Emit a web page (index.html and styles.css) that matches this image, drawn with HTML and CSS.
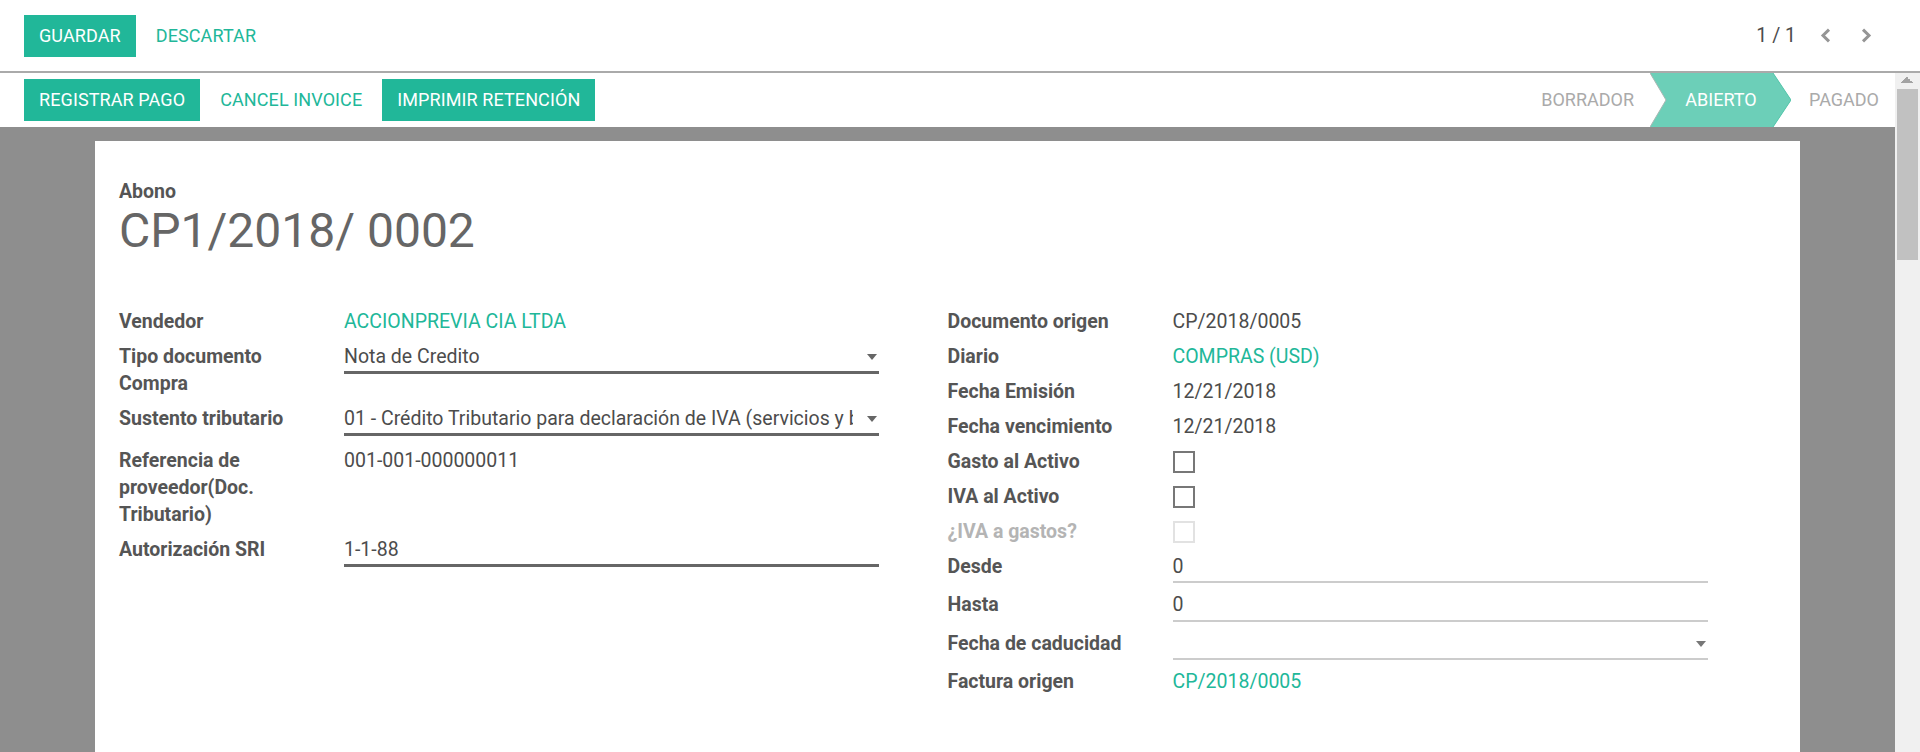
FILE: index.html
```html
<!DOCTYPE html>
<html lang="es">
<head>
<meta charset="utf-8">
<title>CP1/2018/ 0002</title>
<link rel="stylesheet" href="styles.css">
</head>
<body>
<div class="cp">
  <div class="cp-buttons">
    <button class="btn btn-primary">Guardar</button>
    <button class="btn btn-link">Descartar</button>
  </div>
  <div class="pager">
    <span class="pager-value">1 / 1</span>
    <span class="pager-btn"><svg width="11" height="15" viewBox="0 0 11 15"><path d="M9 1.6 L3 7.5 L9 13.4" fill="none" stroke="#959595" stroke-width="3"/></svg></span>
    <span class="pager-btn"><svg width="11" height="15" viewBox="0 0 11 15"><path d="M2 1.6 L8 7.5 L2 13.4" fill="none" stroke="#959595" stroke-width="3"/></svg></span>
  </div>
</div>
<div class="content">
  <div class="main">
    <div class="statusbar">
      <div class="sb-buttons">
        <button class="btn btn-primary">Registrar pago</button>
        <button class="btn btn-link">Cancel Invoice</button>
        <button class="btn btn-primary">Imprimir retención</button>
      </div>
      <div class="sb-status">
        <span class="st st-first">Borrador</span>
        <span class="st st-current">
          <svg class="chev" width="141" height="54" viewBox="0 0 141 54"><polygon points="0,0 123,0 141,27 123,54 0,54 16,27" fill="#6ccfb8"/><polyline points="0,0 16,27 0,54" fill="none" stroke="#a9b7b3" stroke-width="1"/><polyline points="123,0 141,27 123,54" fill="none" stroke="#4fc3a8" stroke-width="1"/></svg>
          <span class="st-label">Abierto</span>
        </span>
        <span class="st st-last">Pagado</span>
      </div>
    </div>
    <div class="sheet-bg">
      <div class="sheet">
        <div class="title-label">Abono</div>
        <h1 class="title">CP1/2018/ 0002</h1>
        <div class="groups">
          <div class="group">
            <div class="lbl">Vendedor</div>
            <div class="val link">ACCIONPREVIA CIA LTDA</div>

            <div class="lbl">Tipo documento Compra</div>
            <div class="val input dark select"><span class="sel-text">Nota de Credito</span><span class="caret"></span></div>

            <div class="lbl">Sustento tributario</div>
            <div class="val input dark select extra"><span class="sel-text">01 - Crédito Tributario para declaración de IVA (servicios y bienes</span><span class="caret"></span></div>

            <div class="lbl">Referencia de proveedor(Doc. Tributario)</div>
            <div class="val">001-001-000000011</div>

            <div class="lbl">Autorización SRI</div>
            <div class="val input dark">1-1-88</div>
          </div>
          <div class="group">
            <div class="lbl">Documento origen</div>
            <div class="val">CP/2018/0005</div>

            <div class="lbl">Diario</div>
            <div class="val link">COMPRAS (USD)</div>

            <div class="lbl">Fecha Emisión</div>
            <div class="val">12/21/2018</div>

            <div class="lbl">Fecha vencimiento</div>
            <div class="val">12/21/2018</div>

            <div class="lbl">Gasto al Activo</div>
            <div class="val"><span class="checkbox"></span></div>

            <div class="lbl">IVA al Activo</div>
            <div class="val"><span class="checkbox"></span></div>

            <div class="lbl muted">¿IVA a gastos?</div>
            <div class="val"><span class="checkbox disabled"></span></div>

            <div class="lbl">Desde</div>
            <div class="val input light">0</div>

            <div class="lbl">Hasta</div>
            <div class="val input light">0</div>

            <div class="lbl">Fecha de caducidad</div>
            <div class="val input light select"><span class="sel-text"></span><span class="caret light-caret"></span></div>

            <div class="lbl">Factura origen</div>
            <div class="val link">CP/2018/0005</div>
          </div>
        </div>
      </div>
    </div>
  </div>
  <div class="vscroll" aria-hidden="true">
    <div class="vs-up"></div>
    <div class="vs-thumb"></div>
  </div>
</div>
</body>
</html>
```

FILE: styles.css
```css
* { box-sizing: border-box; }

html, body {
  margin: 0;
  padding: 0;
  height: 100%;
  overflow: hidden;
}

body {
  font-family: Roboto, "Liberation Sans", sans-serif;
  font-size: 19.5px;
  line-height: 27px;
  color: #4c4c4c;
  background: #ffffff;
}

.btn {
  font-family: inherit;
  font-size: 18px;
  line-height: 42px;
  height: 42px;
  padding: 0 15px;
  border: 0;
  margin: 0;
  letter-spacing: 0.1px;
  text-transform: uppercase;
  background: transparent;
  cursor: pointer;
}

.btn-primary {
  background: #21b799;
  color: #ffffff;
}

.btn-link {
  color: #21b799;
}

/* control panel */
.cp {
  height: 73px;
  border-bottom: 2px solid #aaaaaa;
  display: flex;
  justify-content: space-between;
  align-items: flex-start;
  padding: 15px 0 0 24px;
  background: #ffffff;
}

.cp-buttons,
.sb-buttons {
  display: flex;
  gap: 5px;
}

.pager {
  display: flex;
  align-items: center;
  height: 40px;
  margin-right: 48px;
}

.pager-value {
  color: #4c4c4c;
  margin-right: 24px;
}

.pager-btn {
  display: flex;
  width: 11px;
  height: 15px;
}

.pager-btn + .pager-btn {
  margin-left: 30px;
}

/* content area with scrollbar */
.content {
  height: 679px;
  display: flex;
  overflow: hidden;
}

.main {
  flex: 1;
  min-width: 0;
  background: #8e8e8e;
}

.vscroll {
  width: 25px;
  flex: none;
  background: #f0f0f0;
  display: flex;
  flex-direction: column;
}

.vs-up {
  height: 16px;
  background-image:
    linear-gradient(to bottom right, transparent 50%, #a3a3a3 50%),
    linear-gradient(to bottom left, transparent 50%, #a3a3a3 50%);
  background-size: 6px 6px, 6px 6px;
  background-position: 6px 4px, 12px 4px;
  background-repeat: no-repeat;
}

.vs-thumb {
  height: 171px;
  margin: 0 2px;
  background: #c1c1c1;
}

/* statusbar */
.statusbar {
  height: 54px;
  background: #ffffff;
  display: flex;
  justify-content: space-between;
  align-items: center;
  padding-left: 24px;
}

.sb-status {
  display: flex;
  height: 54px;
  align-items: stretch;
}

.st {
  font-size: 18px;
  line-height: 54px;
  text-transform: uppercase;
  color: #aaaaaa;
}

.st-first {
  padding: 0 16px 0 16px;
}

.st-current {
  position: relative;
  width: 141px;
  text-align: center;
  color: #ffffff;
}

.chev {
  position: absolute;
  left: 0;
  top: 0;
}

.st-label {
  position: relative;
  padding-left: 1px;
}

.st-last {
  padding: 0 16px 0 18px;
}

/* sheet */
.sheet-bg {
  padding-top: 14px;
}

.sheet {
  width: 1705px;
  margin: 0 auto;
  background: #ffffff;
  min-height: 700px;
  padding: 37px 24px 24px 24px;
}

.title-label {
  font-weight: 700;
  color: #555555;
}

.title {
  margin: 0;
  font-size: 48px;
  line-height: 52.8px;
  font-weight: 400;
  color: #666666;
}

.groups {
  display: grid;
  grid-template-columns: 1fr 1fr;
  margin-top: 50px;
}

.group {
  display: grid;
  grid-template-columns: 225px 535px;
  row-gap: 8px;
  align-items: start;
  align-content: start;
}

.lbl {
  font-weight: 700;
  color: #555555;
  padding-right: 36px;
}

.lbl.muted {
  color: #b4b4b4;
}

.val {
  color: #4c4c4c;
  min-height: 27px;
}

.val.link {
  color: #21b799;
}

.val.input {
  padding-bottom: 1.5px;
}

.val.input.dark {
  border-bottom: 3px solid #666666;
}

.val.input.light {
  border-bottom: 2px solid #cccccc;
}

.val.extra {
  margin-bottom: 2.5px;
}

.val.select {
  display: flex;
  align-items: center;
}

.sel-text {
  flex: 1;
  height: 27px;
  white-space: nowrap;
  overflow: hidden;
  margin-right: 14px;
}

.caret {
  width: 0;
  height: 0;
  border-left: 5.5px solid transparent;
  border-right: 5.5px solid transparent;
  border-top: 6px solid #666666;
  margin-right: 2px;
  margin-top: 1px;
}

.caret.light-caret {
  border-top-color: #777777;
}

.checkbox {
  display: block;
  width: 22px;
  height: 22px;
  margin-top: 3px;
  border: 2px solid #777777;
  background: #ffffff;
}

.checkbox.disabled {
  border-color: #e2e2e2;
}
```
